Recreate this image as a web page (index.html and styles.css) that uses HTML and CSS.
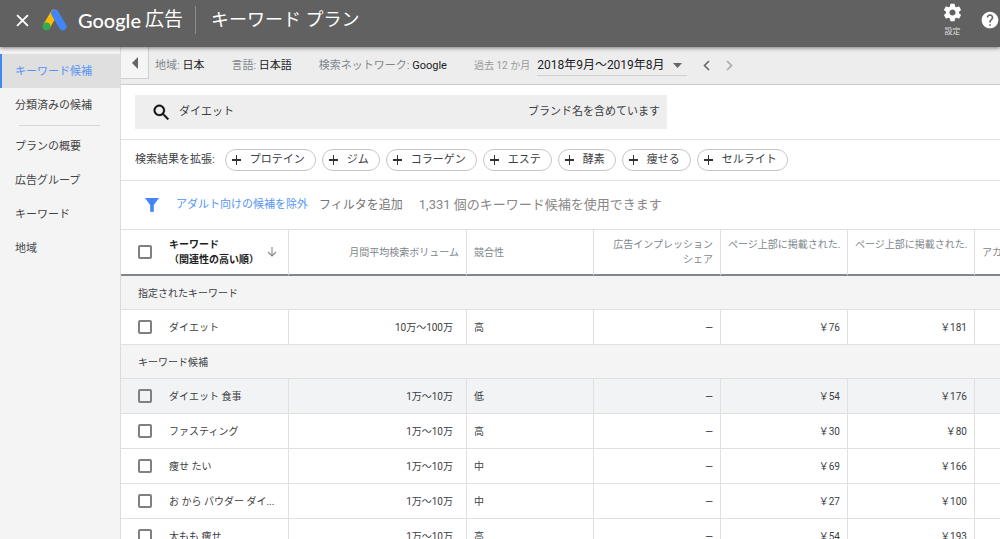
FILE: index.html
```html
<!DOCTYPE html>
<html lang="ja">
<head>
    <meta charset="UTF-8">
    <meta name="viewport" content="width=device-width, initial-scale=1.0">
    <title>キーワード プラン</title>
    <link rel="stylesheet" href="styles.css">
</head>
<body>

    <header class="header">
        <button class="icon-button close" type="button" aria-label="閉じる">
            <svg width="13" height="13" viewBox="0 0 12 12"><path d="M1 1l10 10M11 1L1 11" stroke="#fff" stroke-width="1.7"/></svg>
        </button>
        <svg class="logo" width="26" height="22" viewBox="0 0 26 22">
            <path d="M12 4.5L4.6 17.2" stroke="#fbbc04" stroke-width="7.4" stroke-linecap="round"/>
            <path d="M12.9 4.2L20.8 17.6" stroke="#4285f4" stroke-width="7.6" stroke-linecap="round"/>
            <circle cx="4.5" cy="17.4" r="3.9" fill="#34a853"/>
        </svg>
        <div class="brand"><span class="brand-name">Google</span><span class="brand-product">広告</span></div>
        <h1 class="title">キーワード プラン</h1>
        <button class="icon-button settings" type="button">
            <svg width="21" height="21" viewBox="0 0 24 24"><path fill="#fff" d="M19.43 12.98c.04-.32.07-.64.07-.98s-.03-.66-.07-.98l2.11-1.65c.19-.15.24-.42.12-.64l-2-3.46c-.12-.22-.39-.3-.61-.22l-2.49 1c-.52-.4-1.08-.73-1.69-.98l-.38-2.65C14.46 2.18 14.25 2 14 2h-4c-.25 0-.46.18-.49.42l-.38 2.65c-.61.25-1.17.59-1.69.98l-2.49-1c-.23-.09-.49 0-.61.22l-2 3.46c-.13.22-.07.49.12.64l2.11 1.65c-.04.32-.07.65-.07.98s.03.66.07.98l-2.11 1.65c-.19.15-.24.42-.12.64l2 3.46c.12.22.39.3.61.22l2.49-1c.52.4 1.08.73 1.69.98l.38 2.65c.03.24.24.42.49.42h4c.25 0 .46-.18.49-.42l.38-2.65c.61-.25 1.17-.59 1.69-.98l2.49 1c.23.09.49 0 .61-.22l2-3.46c.12-.22.07-.49-.12-.64l-2.11-1.65zM12 15.5c-1.93 0-3.5-1.57-3.5-3.5s1.57-3.5 3.5-3.5 3.5 1.57 3.5 3.5-1.57 3.5-3.5 3.5z"/></svg>
            <span>設定</span>
        </button>
        <button class="icon-button help" type="button" aria-label="ヘルプ">
            <svg width="20" height="20" viewBox="0 0 24 24"><path fill="#fff" d="M12 2C6.48 2 2 6.48 2 12s4.48 10 10 10 10-4.48 10-10S17.52 2 12 2zm1 17h-2v-2h2v2zm2.07-7.75l-.9.92C13.45 12.9 13 13.5 13 15h-2v-.5c0-1.1.45-2.1 1.17-2.83l1.24-1.26c.37-.36.59-.86.59-1.41 0-1.1-.9-2-2-2s-2 .9-2 2H8c0-2.21 1.79-4 4-4s4 1.79 4 4c0 .88-.36 1.68-.93 2.25z"/></svg>
        </button>
    </header>

    <div class="page">
        <nav class="sidebar">
            <a class="nav-item active" href="#">キーワード候補</a>
            <a class="nav-item" href="#">分類済みの候補</a>
            <hr class="nav-divider">
            <a class="nav-item" href="#">プランの概要</a>
            <a class="nav-item" href="#">広告グループ</a>
            <a class="nav-item" href="#">キーワード</a>
            <a class="nav-item" href="#">地域</a>
        </nav>

        <main class="main">
            <div class="toolbar">
                <button class="collapse" type="button" aria-label="メニューを閉じる">
                    <svg width="6" height="12" viewBox="0 0 6 12"><path d="M6 0v12L0 6z" fill="#666"/></svg>
                </button>
                <div class="setting">地域: <b>日本</b></div>
                <div class="setting">言語: <b>日本語</b></div>
                <div class="setting">検索ネットワーク: <b>Google</b></div>
                <label class="period-label" for="period">過去 12 か月</label>
                <div class="period">
                    <select id="period">
                        <option>2018年9月～2019年8月</option>
                    </select>
                    <svg class="period-arrow" width="9" height="5" viewBox="0 0 9 5"><path d="M0 0h9L4.5 5z" fill="#666"/></svg>
                </div>
                <button class="icon-button step" type="button" aria-label="前の期間">
                    <svg width="7" height="11" viewBox="0 0 7 11"><path d="M6 1L1.5 5.5 6 10" fill="none" stroke="#666" stroke-width="1.6"/></svg>
                </button>
                <button class="icon-button step" type="button" aria-label="次の期間">
                    <svg width="7" height="11" viewBox="0 0 7 11"><path d="M1 1l4.5 4.5L1 10" fill="none" stroke="#aaa" stroke-width="1.6"/></svg>
                </button>
            </div>

            <div class="search-row">
                <div class="search">
                    <svg width="21" height="21" viewBox="0 0 24 24"><path fill="#111" d="M15.5 14h-.79l-.28-.27C15.41 12.59 16 11.11 16 9.5 16 5.91 13.09 3 9.5 3S3 5.91 3 9.5 5.91 16 9.5 16c1.61 0 3.09-.59 4.23-1.57l.27.28v.79l5 4.99L20.49 19l-4.99-5zm-6 0C7.01 14 5 11.99 5 9.5S7.01 5 9.5 5 14 7.01 14 9.5 11.99 14 9.5 14z" stroke="#111" stroke-width=".3"/></svg>
                    <input class="search-input" type="text" value="ダイエット" aria-label="キーワード">
                    <span>ブランド名を含めています</span>
                </div>
            </div>

            <div class="expand-row">
                <span class="expand-label">検索結果を拡張:</span>
                <button class="chip" type="button">プロテイン</button>
                <button class="chip" type="button">ジム</button>
                <button class="chip" type="button">コラーゲン</button>
                <button class="chip" type="button">エステ</button>
                <button class="chip" type="button">酵素</button>
                <button class="chip" type="button">痩せる</button>
                <button class="chip" type="button">セルライト</button>
            </div>

            <div class="filter-row">
                <svg width="14" height="14" viewBox="0 0 14 14"><path d="M0 0h14L8.8 7v6.2L8 14H6l-.8-.8V7z" fill="#4285f4"/></svg>
                <a class="filter-link" href="#">アダルト向けの候補を除外</a>
                <button class="add-filter" type="button">フィルタを追加</button>
                <span class="count">1,331 個のキーワード候補を使用できます</span>
            </div>

            <table class="keywords">
                <colgroup>
                    <col class="col-check">
                    <col class="col-keyword">
                    <col class="col-volume">
                    <col class="col-metric">
                    <col class="col-metric">
                    <col class="col-metric">
                    <col class="col-metric">
                    <col>
                </colgroup>
                <thead>
                    <tr>
                        <th class="check"><input type="checkbox" aria-label="すべて選択"></th>
                        <th class="keyword sorted">
                            <div class="sort">
                                <span>キーワード<br>（関連性の高い順）</span>
                                <svg width="10" height="10" viewBox="0 0 10 10"><path d="M5 0v9M1 5l4 4 4-4" fill="none" stroke="#888" stroke-width="1.1"/></svg>
                            </div>
                        </th>
                        <th class="num">月間平均検索ボリューム</th>
                        <th>競合性</th>
                        <th class="num">広告インプレッション<br>シェア</th>
                        <th class="bid">ページ上部に掲載された.</th>
                        <th class="bid">ページ上部に掲載された.</th>
                        <th class="account">アカ</th>
                    </tr>
                </thead>
                <tbody>
                    <tr class="group"><td colspan="8">指定されたキーワード</td></tr>
                    <tr>
                        <td class="check"><input type="checkbox" id="k1"></td>
                        <td class="keyword"><label for="k1">ダイエット</label></td>
                        <td class="volume">10万～100万</td><td>高</td><td class="num">—</td><td class="num">￥76</td><td class="num">￥181</td><td></td>
                    </tr>
                    <tr class="group"><td colspan="8">キーワード候補</td></tr>
                    <tr class="hover">
                        <td class="check"><input type="checkbox" id="k2"></td>
                        <td class="keyword"><label for="k2">ダイエット 食事</label></td>
                        <td class="volume">1万～10万</td><td>低</td><td class="num">—</td><td class="num">￥54</td><td class="num">￥176</td><td></td>
                    </tr>
                    <tr>
                        <td class="check"><input type="checkbox" id="k3"></td>
                        <td class="keyword"><label for="k3">ファスティング</label></td>
                        <td class="volume">1万～10万</td><td>高</td><td class="num">—</td><td class="num">￥30</td><td class="num">￥80</td><td></td>
                    </tr>
                    <tr>
                        <td class="check"><input type="checkbox" id="k4"></td>
                        <td class="keyword"><label for="k4">痩せ たい</label></td>
                        <td class="volume">1万～10万</td><td>中</td><td class="num">—</td><td class="num">￥69</td><td class="num">￥166</td><td></td>
                    </tr>
                    <tr>
                        <td class="check"><input type="checkbox" id="k5"></td>
                        <td class="keyword"><label for="k5">お から パウダー ダイ...</label></td>
                        <td class="volume">1万～10万</td><td>中</td><td class="num">—</td><td class="num">￥27</td><td class="num">￥100</td><td></td>
                    </tr>
                    <tr>
                        <td class="check"><input type="checkbox" id="k6"></td>
                        <td class="keyword"><label for="k6">太もも 痩せ</label></td>
                        <td class="volume">1万～10万</td><td>高</td><td class="num">—</td><td class="num">￥54</td><td class="num">￥193</td><td></td>
                    </tr>
                </tbody>
            </table>
        </main>
    </div>

</body>
</html>
```
FILE: styles.css
```css
* {
    box-sizing: border-box;
}
body {
    margin: 0;
    height: 100vh;
    display: flex;
    flex-direction: column;
    overflow: hidden;
    font-family: Roboto, "Noto Sans CJK JP", sans-serif;
    font-size: 11px;
    line-height: 16px;
    color: #3c4043;
    background-color: #fff;
}
button, input, select {
    font: inherit;
    color: inherit;
    margin: 0;
    padding: 0;
    border: 0;
    background: none;
}
svg {
    display: block;
    flex: none;
}
a {
    text-decoration: none;
}

/* Header */
.header {
    position: relative;
    z-index: 2;
    display: flex;
    align-items: center;
    flex: none;
    height: 47px;
    padding: 0 0 7px 16px;
    background-color: #616161;
    color: #fff;
    box-shadow: 0 1px 4px rgba(0, 0, 0, 0.5);
}
.icon-button {
    display: flex;
    align-items: center;
    justify-content: center;
}
.logo {
    margin-left: 13px;
}
.brand {
    display: flex;
    align-items: center;
    gap: 4px;
    margin-left: 10px;
    padding-right: 12px;
    border-right: 1px solid #8c8c8c;
    line-height: 28px;
}
.brand-name {
    font-family: Lato, sans-serif;
    font-size: 20px;
    font-weight: 500;
}
.brand-product {
    font-size: 19px;
}
.title {
    margin: 0 auto 0 15px;
    font-size: 18px;
    font-weight: 400;
}
.settings {
    flex-direction: column;
    font-size: 8px;
    line-height: 14px;
    color: #ddd;
    gap: 2px;
}
.help {
    margin-left: 17px;
}

/* Sidebar */
.page {
    display: flex;
    flex: 1;
    min-height: 0;
}
.sidebar {
    flex: none;
    width: 121px;
    padding-top: 7px;
    background-color: #f4f4f4;
    border-right: 1px solid #dcdcdc;
}
.nav-item {
    display: block;
    padding: 2px 13px 0;
    border-left: 2px solid transparent;
    line-height: 32px;
    color: #444;
}
.nav-item.active {
    border-left-color: #4285f4;
    background-color: #dfdfdf;
    color: #5594f7;
}
.nav-divider {
    margin: 3px 20px 3px 19px;
    border: 0;
    border-top: 1px solid #d8d8d8;
}

/* Toolbar */
.main {
    flex: 1;
    min-width: 0;
    overflow: hidden;
}
.toolbar {
    display: flex;
    align-items: center;
    height: 38px;
    background-color: #ededed;
    border-bottom: 1px solid #ccc;
}
.collapse {
    display: flex;
    align-items: center;
    justify-content: center;
    align-self: flex-start;
    width: 28px;
    height: 32px;
    margin-right: 6px;
    background-color: #f5f5f5;
    border-right: 1px solid #d0d0d0;
    border-bottom: 1px solid #d0d0d0;
}
.setting {
    margin-right: 27px;
    color: #80868b;
    white-space: nowrap;
}
.setting b {
    font-weight: 400;
    color: #202124;
}
.period-label {
    margin-right: 7px;
    font-size: 10px;
    color: #999;
    white-space: nowrap;
}
.period {
    position: relative;
    width: 150px;
    border-bottom: 1px solid #d0d0d0;
}
.period select {
    appearance: none;
    width: 100%;
    height: 20px;
    font-size: 12px;
    color: #202124;
}
.period-arrow {
    position: absolute;
    right: 5px;
    top: 8px;
    pointer-events: none;
}
.step {
    margin-left: 16px;
}

/* Search and suggestions */
.search-row {
    padding: 10px 14px;
    border-bottom: 1px solid #e0e0e0;
}
.search {
    display: flex;
    align-items: center;
    width: 532px;
    max-width: 100%;
    height: 34px;
    padding: 0 7px 0 16px;
    background-color: #eee;
}
.search-input {
    flex: 1;
    min-width: 0;
    margin-left: 7px;
    outline: none;
}
.expand-row {
    display: flex;
    align-items: center;
    gap: 6px;
    height: 41px;
    padding-left: 14px;
    border-bottom: 1px solid #e0e0e0;
    white-space: nowrap;
}
.expand-label {
    margin-right: 4px;
}
.chip {
    display: flex;
    align-items: center;
    gap: 9px;
    height: 22px;
    padding: 0 10px 0 6px;
    border: 1px solid #c6c6c6;
    border-radius: 11px;
}
/* Plus sign */
.chip::before {
    content: "";
    width: 9px;
    height: 10px;
    background:
        linear-gradient(#333, #333) center / 9px 2px no-repeat,
        linear-gradient(#333, #333) 4px 0 / 1px 10px no-repeat;
}
.filter-row {
    display: flex;
    align-items: center;
    height: 48px;
    padding-left: 24px;
    white-space: nowrap;
}
.filter-link {
    margin-left: 17px;
    color: #5594f7;
}
.add-filter {
    margin-left: 11px;
    font-size: 12px;
    color: #757575;
}
.count {
    margin-left: 16px;
    font-size: 13px;
    color: #888;
}

/* Keyword table */
.keywords {
    width: 100%;
    table-layout: fixed;
    border-collapse: separate;
    border-spacing: 0;
    border-top: 1px solid #e0e0e0;
    font-size: 10px;
    line-height: 15px;
}
.col-check {
    width: 41px;
}
.col-keyword {
    width: 127px;
}
.col-volume {
    width: 178px;
}
.col-metric {
    width: 127px;
}
.keywords th {
    height: 46px;
    padding: 0 7px;
    border-right: 1px solid #e0e0e0;
    border-bottom: 2px solid #80868b;
    font-weight: 400;
    text-align: left;
    color: #80868b;
}
.keywords td {
    height: 35px;
    padding: 1px 7px 0;
    border-right: 1px solid #e0e0e0;
    border-bottom: 1px solid #e0e0e0;
}
.keywords td:last-child {
    border-right: 0;
}
.keywords .group td {
    height: 34px;
    padding-left: 17px;
    background-color: #f4f4f4;
}
.keywords .hover td {
    background-color: #f1f3f4;
}
.keywords .check {
    padding: 0 0 0 17px;
    border-right: 0;
}
.keywords .keyword {
    white-space: nowrap;
}
.keywords .sorted {
    font-weight: 700;
    color: #202124;
}
.sort {
    display: flex;
    align-items: center;
    justify-content: space-between;
    padding-right: 4px;
}
.keywords .num {
    text-align: right;
}
.keywords .volume {
    padding-right: 13px;
    text-align: right;
}
.keywords .bid {
    padding-bottom: 15px;
    white-space: nowrap;
}
.keywords th.account {
    padding-right: 0;
    border-right: 0;
    white-space: nowrap;
}
.keywords input {
    appearance: none;
    display: block;
    width: 14px;
    height: 14px;
    border: 2px solid #808080;
    border-radius: 2px;
}
.keywords input:checked {
    background-color: #4285f4;
    border-color: #4285f4;
}
```
